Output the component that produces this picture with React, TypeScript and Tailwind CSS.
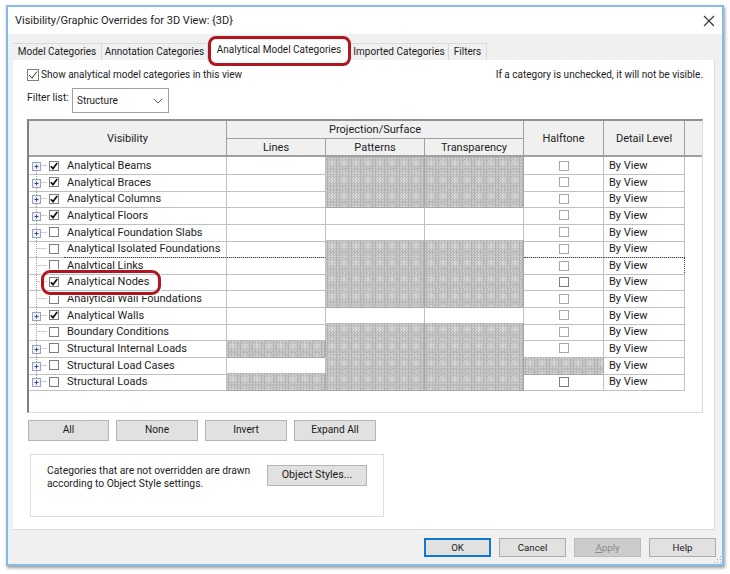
import React from "react";

const rows: { n: string; exp: boolean; chk: boolean; pat: string; ht: boolean }[] = [
  { n: "Analytical Beams", exp: true, chk: true, pat: "pt", ht: true },
  { n: "Analytical Braces", exp: true, chk: true, pat: "pt", ht: true },
  { n: "Analytical Columns", exp: true, chk: true, pat: "pt", ht: true },
  { n: "Analytical Floors", exp: true, chk: true, pat: "", ht: true },
  { n: "Analytical Foundation Slabs", exp: true, chk: false, pat: "", ht: true },
  { n: "Analytical Isolated Foundations", exp: false, chk: false, pat: "pt", ht: true },
  { n: "Analytical Links", exp: false, chk: false, pat: "pt", ht: true },
  { n: "Analytical Nodes", exp: false, chk: true, pat: "pt", ht: true },
  { n: "Analytical Wall Foundations", exp: false, chk: false, pat: "pt", ht: true },
  { n: "Analytical Walls", exp: true, chk: true, pat: "", ht: true },
  { n: "Boundary Conditions", exp: false, chk: false, pat: "pt", ht: true },
  { n: "Structural Internal Loads", exp: true, chk: false, pat: "lpt", ht: true },
  { n: "Structural Load Cases", exp: true, chk: false, pat: "pt", ht: false },
  { n: "Structural Loads", exp: true, chk: false, pat: "lpt", ht: true },
];

const hatch =
  "border-[#a6a6a6] bg-[radial-gradient(circle,rgba(236,236,236,0.5)_0,rgba(236,236,236,0)_60%),repeating-conic-gradient(#b2b2b2_0_25%,#cdcdcd_0_50%)] bg-[length:12px_12px,3px_3px]";
const plain = "border-[#c0c0c0]";

function Check({ on, muted }: { on: boolean; muted?: boolean }) {
  return (
    <span className={`flex h-[10px] w-[10px] shrink-0 items-center justify-center border bg-white ${muted ? "border-[#a8a8a8]" : "border-[#7d7d7d]"}`}>
      {on && (
        <svg width="8" height="8" viewBox="0 0 8 8">
          <path d="M0.8 4.2 L3 6.6 L7.2 1" fill="none" stroke="#111" strokeWidth="1.7" />
        </svg>
      )}
    </span>
  );
}

function Btn({ w, children, extra }: { w: string; children: React.ReactNode; extra?: string }) {
  return (
    <div className={`flex items-center justify-center border text-[#1a1a1a] ${w} ${extra ?? "h-[21px] border-[#b4b4b4] bg-[#e1e1e1]"}`}>
      {children}
    </div>
  );
}

function Expander({ exp, first, last }: { exp: boolean; first: boolean; last: boolean }) {
  return (
    <svg width="20" height="17" viewBox="0 0 20 17" className="shrink-0">
      <path d={`M7.5 ${first ? 8 : 0} V${last ? 9 : 17}`} stroke="#a0a0a0" strokeDasharray="1 1" fill="none" />
      <path d="M7.5 8.5 H18" stroke="#a0a0a0" strokeDasharray="1 1" fill="none" />
      {exp && (
        <g>
          <rect x="3.5" y="5.5" width="8" height="8" fill="#eef1f8" stroke="#9aa3bd" />
          <path d="M5.5 9.5 H9.5 M7.5 7.5 V11.5" stroke="#3c4a86" fill="none" />
        </g>
      )}
    </svg>
  );
}

const cell = "border-r border-b";
const dot = "border-t border-t-[#444] [border-top-style:dotted]";

export default function App() {
  return (
    <div
      className="relative h-[574px] w-[730px] overflow-hidden bg-white pl-[6px] pr-[6px] pt-[5px] pb-[6px] text-[10px] leading-none text-[#1c1c1c]"
      style={{ fontFamily: 'Roboto, "Noto Sans", sans-serif' }}
    >
      <div className="flex h-[561px] w-[718px] flex-col border-2 border-[#86bbe9] bg-[#f0f0f0] shadow-[1px_2px_3px_rgba(0,0,0,0.4)]">
        {/* Title bar */}
        <div className="flex h-[27px] shrink-0 items-center justify-between bg-white pl-[7px] pr-[7px]">
          <span className="text-[11px] text-[#222]">Visibility/Graphic Overrides for 3D View: {"{3D}"}</span>
          <svg width="12" height="12" viewBox="0 0 12 12">
            <path d="M1 1 L11 11 M11 1 L1 11" stroke="#333" strokeWidth="1.1" fill="none" />
          </svg>
        </div>

        {/* Tabs */}
        <div className="flex h-[26px] shrink-0 items-end pl-[5px] pt-[9px]">
          {[
            ["Model Categories", "w-[89px]"],
            ["Annotation Categories", "w-[106px]"],
            ["Analytical Model Categories", "w-[142px] active"],
            ["Imported Categories", "w-[99px]"],
            ["Filters", "w-[38px]"],
          ].map(([t, w]) =>
            w.includes("active") ? (
              <div key={t} className="flex h-[20px] w-[142px] shrink-0 items-center justify-center whitespace-nowrap bg-white pb-[1px]">
                {t}
              </div>
            ) : (
              <div key={t} className={`flex h-[17px] shrink-0 items-center justify-center whitespace-nowrap border-r border-t border-[#d9d9d9] bg-[#f0f0f0] ${w}`}>
                {t}
              </div>
            ),
          )}
        </div>

        {/* Panel */}
        <div className="ml-[5px] flex h-[470px] w-[702px] shrink-0 flex-col border-b border-r border-[#dcdcdc] bg-white pl-[14px]">
          <div className="flex h-[28px] shrink-0 items-center justify-between pr-[11px] pt-[1px]">
            <div className="flex items-center gap-[2px]">
              <span className="flex h-[12px] w-[12px] items-center justify-center border border-[#7d7d7d]">
                <svg width="10" height="10" viewBox="0 0 10 10">
                  <path d="M1 5 L4 8.2 L9 1.5" fill="none" stroke="#333" strokeWidth="1" />
                </svg>
              </span>
              <span>Show analytical model categories in this view</span>
            </div>
            <span>If a category is unchecked, it will not be visible.</span>
          </div>
          <div className="flex h-[26px] shrink-0 items-start">
            <span className="w-[45px] pt-[5px] text-[10.3px]">Filter list:</span>
            <div className="flex h-[25px] w-[97px] items-center justify-between border border-[#a0a0a0] pl-[4px] pr-[5px] pt-[1px]">
              <span>Structure</span>
              <svg width="10" height="6" viewBox="0 0 10 6">
                <path d="M1 1 L5 5 L9 1" fill="none" stroke="#555" />
              </svg>
            </div>
          </div>

          {/* Table */}
          <div className="mt-[5px] h-[294px] w-[676px] shrink-0 border-b border-r border-[#dcdcdc] border-l-2 border-l-[#808080] border-t-2 border-t-[#909090] text-[11px]">
            <div className="grid h-[36px] grid-cols-[198px_99px_99px_99px_80px_81px_1fr] grid-rows-[18px_18px] bg-[#f0f0f0] text-[#222]">
              <div className="row-span-2 flex items-center justify-center border-b-2 border-r border-[#a0a0a0]">Visibility</div>
              <div className="col-span-3 flex items-center justify-center border-b border-r border-[#a0a0a0]">Projection/Surface</div>
              <div className="row-span-2 flex items-center justify-center border-b-2 border-r border-[#a0a0a0]">Halftone</div>
              <div className="row-span-2 flex items-center justify-center border-b-2 border-r border-[#a0a0a0]">Detail Level</div>
              <div className="row-span-2 border-b-2 border-[#a0a0a0]"></div>
              <div className="flex items-center justify-center border-b-2 border-r border-[#a0a0a0]">Lines</div>
              <div className="flex items-center justify-center border-b-2 border-r border-[#a0a0a0]">Patterns</div>
              <div className="flex items-center justify-center border-b-2 border-r border-[#a0a0a0]">Transparency</div>
            </div>
            {rows.map((r, i) => {
              const focus = r.n === "Analytical Links";
              return (
                <div key={r.n} className="grid h-[16.64px] w-[656px] grid-cols-[198px_99px_99px_99px_80px_81px]">
                  <div className={`flex items-center ${cell} ${plain}`}>
                    <Expander exp={r.exp} first={i === 0} last={i === rows.length - 1} />
                    <Check on={r.chk} />
                    <span className={`ml-[5px] flex h-full flex-1 items-center whitespace-nowrap pl-[3px] ${focus ? dot : ""}`}>
                      {r.n}
                    </span>
                  </div>
                  <div className={`${cell} ${r.pat === "lpt" ? hatch : plain} ${focus ? dot : ""}`}></div>
                  <div className={`${cell} ${r.pat ? hatch : plain}`}></div>
                  <div className={`${cell} ${r.pat ? hatch : plain}`}></div>
                  <div className={`flex items-center justify-center ${cell} ${r.ht ? plain : hatch} ${focus ? dot : ""}`}>
                    {r.ht && <Check on={false} muted={i !== 13 && i !== 7} />}
                  </div>
                  <div className={`flex items-center pl-[5px] ${cell} ${plain} ${focus ? `${dot} border-r-[#444] [border-right-style:dotted]` : ""}`}>By View</div>
                </div>
              );
            })}
          </div>

          {/* Buttons */}
          <div className="ml-[1px] mt-[7px] flex shrink-0 gap-[7px] text-[10.2px]">
            <Btn w="w-[81px]">All</Btn>
            <Btn w="w-[82px]">None</Btn>
            <Btn w="w-[82px]">Invert</Btn>
            <Btn w="w-[82px]">Expand All</Btn>
          </div>

          {/* Group */}
          <div className="ml-[3px] mt-[13px] flex h-[63px] w-[354px] shrink-0 items-start border border-[#dedede] pl-[16px] pt-[10px] text-[10.3px]">
            <div className="w-[220px] whitespace-nowrap leading-[12.5px]">
              Categories that are not overridden are drawn
              <br />
              according to Object Style settings.
            </div>
            <Btn w="w-[100px] text-[10.7px]">Object Styles...</Btn>
          </div>
        </div>

        {/* Footer */}
        <div className="relative flex flex-1 justify-end gap-[8px] pr-[6px] pt-[8px] text-[9.7px]">
          <Btn w="w-[67px]" extra="h-[19px] border-2 border-[#0f78d4] bg-[#e1e1e1]">OK</Btn>
          <Btn w="w-[67px]" extra="h-[19px] border border-[#adadad] bg-[#e1e1e1]">Cancel</Btn>
          <Btn w="w-[67px]" extra="h-[19px] border border-[#bcbcbc] bg-[#cccccc]">
            <span className="text-[#8a8a8a]"><span className="underline">A</span>pply</span>
          </Btn>
          <Btn w="w-[67px]" extra="h-[19px] border border-[#adadad] bg-[#e1e1e1]">Help</Btn>
          <svg width="8" height="8" viewBox="0 0 8 8" className="absolute bottom-0 right-0">
            <path d="M6 0h1v1H6z M3 3h1v1H3z M6 3h1v1H6z M0 6h1v1H0z M3 6h1v1H3z M6 6h1v1H6z" fill="#a8a8a8" />
          </svg>
        </div>
      </div>

      {/* Annotations */}
      <div className="absolute left-[208px] top-[36px] h-[30px] w-[143px] rounded-[8px] border-[3px] border-[#b0161f]"></div>
      <div className="absolute left-[41px] top-[270px] h-[25px] w-[120px] rounded-[9px] border-[3px] border-[#b0161f] shadow-[0_0_0_1px_white]"></div>
    </div>
  );
}
